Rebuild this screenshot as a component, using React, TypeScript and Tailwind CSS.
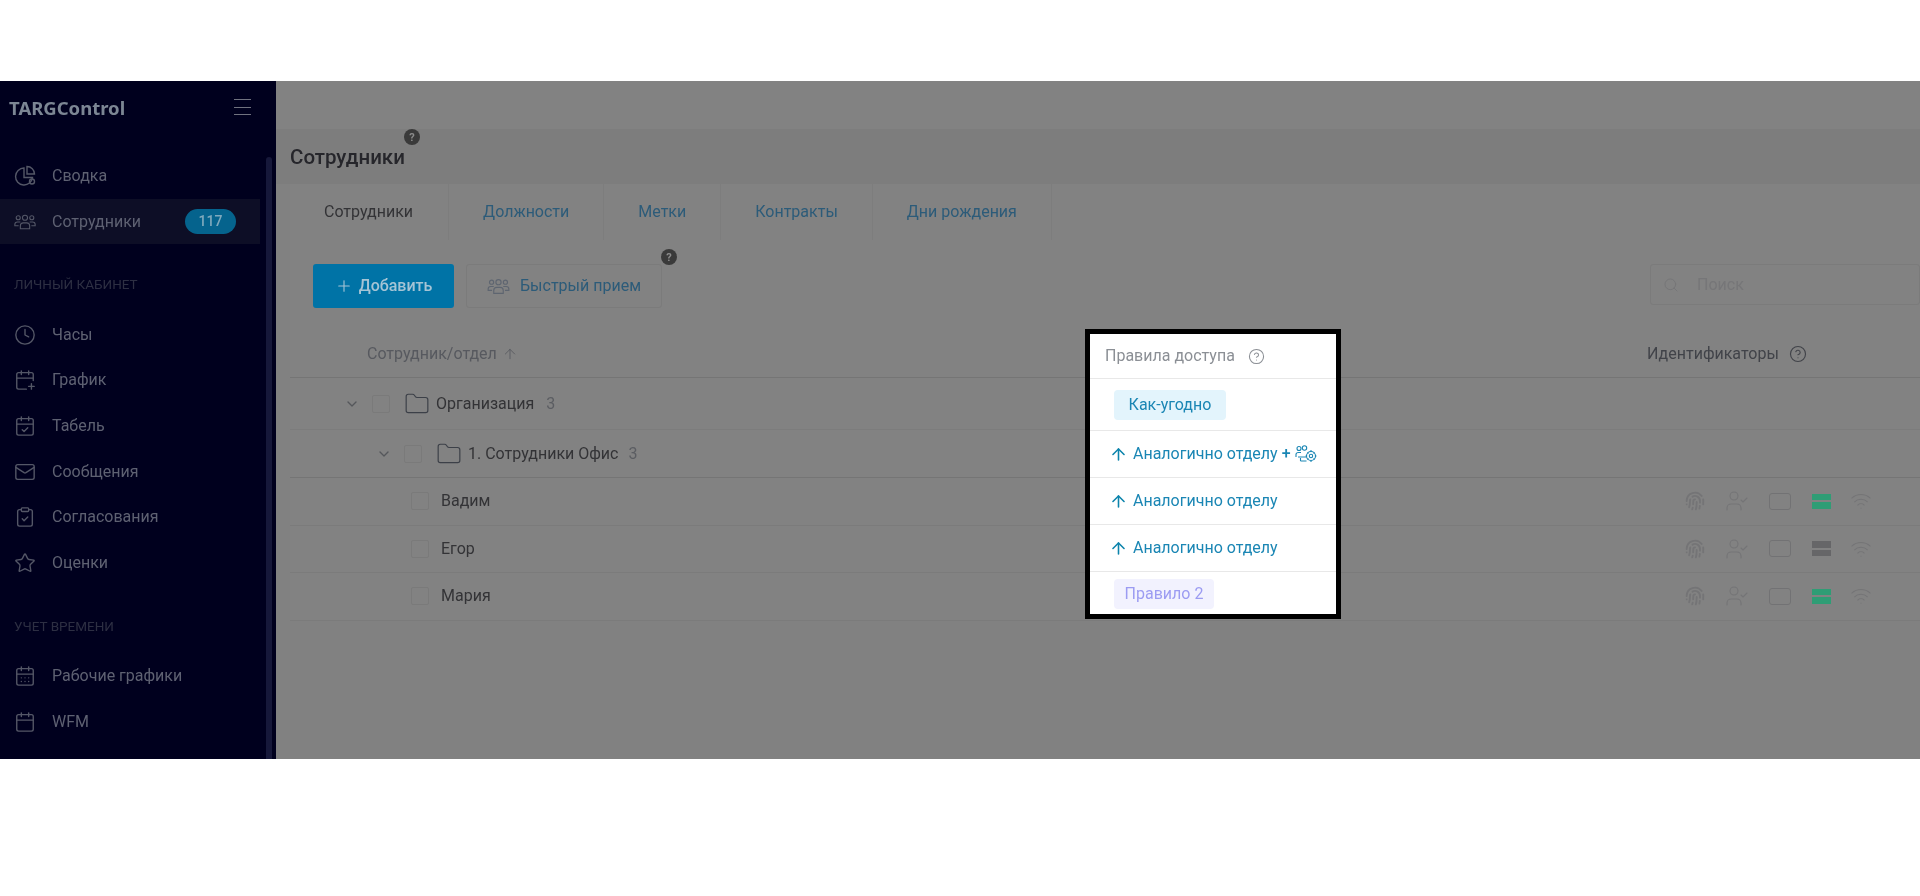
import React from "react";
import {
  ArrowUp,
  Calendar,
  CalendarCheck,
  CalendarDays,
  CalendarPlus,
  ChevronDown,
  CircleHelp,
  ClipboardCheck,
  Clock,
  Fingerprint,
  Folder,
  Mail,
  Plus,
  Search,
  Star,
  UserCheck,
  Wifi,
} from "lucide-react";

function PeopleIcon({ className }: { className?: string }) {
  return (
    <svg viewBox="0 0 26 22" fill="none" stroke="currentColor" strokeWidth="1.3" className={className}>
      <circle cx="13" cy="6" r="3" />
      <circle cx="5" cy="6" r="2.4" />
      <circle cx="21" cy="6" r="2.4" />
      <path d="M7.5 19v-3.5c0-2 1.5-3.5 3.5-3.5h4c2 0 3.5 1.5 3.5 3.5V19z" />
      <path d="M7.5 11H4c-1.7 0-3 1.3-3 3v1.500h4.500" />
      <path d="M18.500 11H22c1.700 0 3 1.300 3 3v1.500h-4.500" />
    </svg>
  );
}

function PieIcon({ className }: { className?: string }) {
  return (
    <svg viewBox="0 0 22 22" fill="none" stroke="currentColor" strokeWidth="1.4" className={className}>
      <path d="M10 3a8.500 8.500 0 1 0 8.500 9.500H10z" />
      <path d="M13 1.500a7.500 7.500 0 0 1 7.500 7.500H13z" />
      <circle cx="18" cy="16.500" r="2.500" />
    </svg>
  );
}

function UserGearIcon({ className }: { className?: string }) {
  return (
    <svg viewBox="0 0 22 18" fill="none" stroke="currentColor" strokeWidth="1.100" className={className}>
      <circle cx="4" cy="3.500" r="2" />
      <circle cx="9.500" cy="3" r="2.200" />
      <path d="M1 12V9.500C1 8 2 7.500 3.500 7.500H6M3 12h8M5.500 16h6M5.500 16v-3" />
      <circle cx="16" cy="11" r="4.500" />
      <circle cx="16" cy="11" r="1.700" />
      <path d="M16 5v1.500M16 15.500V17M10.500 11H12M20 11h1.500M12.500 7.500l1 1M18.500 13.500l1 1M19.500 7.500l-1 1M13.500 13.500l-1 1" />
    </svg>
  );
}

function HelpBadge({ className }: { className: string }) {
  return (
    <span className={`absolute flex h-4 w-4 items-center justify-center rounded-full bg-[#3a3a3a] text-[11px] font-bold leading-none text-[#8c8c8c] ${className}`}>
      ?
    </span>
  );
}

function NavItem({
  icon: Icon,
  label,
  active,
  badge,
}: {
  icon: React.ComponentType<{ className?: string; strokeWidth?: number }>;
  label: string;
  active?: boolean;
  badge?: string;
}) {
  return (
    <div className={`flex h-[45.700px] w-[260px] items-center pl-[14px] ${active ? "bg-[#0d0e26]" : ""}`}>
      <Icon className="h-[22px] w-[22px] flex-none text-[#545767]" strokeWidth={1.500} />
      <span className="ml-4 text-[16px] leading-5 text-[#5e6172]">{label}</span>
      {badge ? (
        <span className="ml-auto mr-[24px] flex h-[25px] w-[51px] items-center justify-center rounded-full bg-[#05638d] text-[14px] font-medium text-[#7fa9bd]">
          {badge}
        </span>
      ) : null}
    </div>
  );
}

function SectionTitle({ children }: { children: string }) {
  return (
    <div className="h-[67.400px] pl-[14px] pt-[32px] text-[13.500px] leading-4 text-[#2d2f43]">{children}</div>
  );
}

function Tab({ children, active, first }: { children: string; active?: boolean; first?: boolean }) {
  return (
    <div
      className={`flex h-[56px] items-center border-r border-[#7d7d7d] text-[16px] ${first ? "pl-[34px] pr-[35px]" : "px-[34px]"} ${
        active ? "text-[#333336]" : "text-[#2c5b79]"
      }`}
    >
      {children}
    </div>
  );
}

function Keypad({ on }: { on: boolean }) {
  return (
    <span className={`flex h-[15px] w-[19px] flex-col justify-between rounded-[1px] ${on ? "text-[#2f9d75]" : "text-[#666668]"}`}>
      <span className="h-[6.500px] w-full bg-current" />
      <span className="h-[6.500px] w-full bg-current" />
    </span>
  );
}

function Identifiers({ on }: { on: boolean }) {
  return (
    <div className="absolute left-[1384px] flex items-center text-[#747476]">
      <span className="flex w-[42px] justify-center">
        <Fingerprint className="h-[20px] w-[20px]" strokeWidth={2.200} />
      </span>
      <span className="flex w-[42px] justify-center">
        <UserCheck className="h-[24px] w-[24px]" strokeWidth={1.100} />
      </span>
      <span className="flex w-[44px] justify-center">
        <span className="h-[17px] w-[22px] rounded-[3px] border border-[#727274]" />
      </span>
      <span className="flex w-[38px] justify-center">
        <Keypad on={on} />
      </span>
      <span className="flex w-[42px] justify-center">
        <Wifi className="h-[22px] w-[22px]" strokeWidth={1.100} />
      </span>
    </div>
  );
}

function EmployeeRow({ name, on }: { name: string; on?: boolean }) {
  return (
    <div className="relative flex h-[47.500px] items-center border-b border-[#7b7b7b] pl-[121px] text-[16px] text-[#333336]">
      <span className="h-[18px] w-[18px] rounded-[2px] border border-[#7a7a7a]" />
      <span className="ml-[12px]">{name}</span>
      {on === undefined ? null : <Identifiers on={on} />}
    </div>
  );
}

function InheritRow({ plus }: { plus?: boolean }) {
  return (
    <div className="flex h-[47px] items-center border-b border-[#e8e8e8] pl-[19px] text-[16px] text-[#1a86b4]">
      <ArrowUp className="h-[19px] w-[19px] text-[#0d84ac]" strokeWidth={2} />
      <span className="ml-[5px]">Аналогично отделу</span>
      {plus ? (
        <>
          <span className="ml-[4px] font-medium">+</span>
          <UserGearIcon className="ml-[4px] h-[18px] w-[22px]" />
        </>
      ) : null}
    </div>
  );
}

export default function App() {
  return (
    <div className="h-[896px] overflow-hidden bg-white pt-[81px] [font-family:Roboto,sans-serif] blur-[0.4px]">
      <div className="flex h-[678px]">
        <aside className="relative w-[276px] flex-none bg-[#00001e]">
          <div className="flex h-[72px] items-start justify-between pl-[9px] pr-[25px] pt-[15px]">
            <span className="[font-family:'Noto_Sans',sans-serif] text-[18.500px] font-bold leading-6 text-[#7c8694]">TARGControl</span>
            <span className="mt-[3px] flex h-[16px] w-[17px] flex-col justify-between">
              <span className="h-px bg-[#70727f]" />
              <span className="h-px bg-[#70727f]" />
              <span className="h-px bg-[#70727f]" />
            </span>
          </div>
          <NavItem icon={PieIcon} label="Сводка" />
          <NavItem icon={PeopleIcon} label="Сотрудники" active badge="117" />
          <SectionTitle>ЛИЧНЫЙ КАБИНЕТ</SectionTitle>
          <NavItem icon={Clock} label="Часы" />
          <NavItem icon={CalendarPlus} label="График" />
          <NavItem icon={CalendarCheck} label="Табель" />
          <NavItem icon={Mail} label="Сообщения" />
          <NavItem icon={ClipboardCheck} label="Согласования" />
          <NavItem icon={Star} label="Оценки" />
          <SectionTitle>УЧЕТ ВРЕМЕНИ</SectionTitle>
          <NavItem icon={CalendarDays} label="Рабочие графики" />
          <NavItem icon={Calendar} label="WFM" />
          <div className="absolute bottom-0 left-[266px] top-[76px] w-[6px] rounded-t bg-[#16183a]" />
        </aside>

        <main className="relative min-w-0 flex-1 overflow-hidden bg-[#818181]">
          <div className="h-[48px] bg-[#828282]" />
          <div className="relative flex h-[55px] items-center bg-[#7d7d7d] pl-[14px]">
            <h1 className="text-[20.500px] font-medium leading-7 text-[#26262b]">Сотрудники</h1>
            <HelpBadge className="left-[128px] top-[0px]" />
          </div>
          <div className="ml-[14px] bg-[#828282]">
            <div className="flex h-[56px]">
              <Tab active first>Сотрудники</Tab>
              <Tab>Должности</Tab>
              <Tab>Метки</Tab>
              <Tab>Контракты</Tab>
              <Tab>Дни рождения</Tab>
            </div>
            <div className="relative flex h-[90px] items-start pl-[23px] pt-[24px]">
              <button className="flex h-[44px] w-[141px] items-center justify-center gap-[6px] rounded-[3px] bg-[#0073a6] text-[16px] font-medium text-[#a5c4d5]">
                <Plus className="h-[18px] w-[18px]" strokeWidth={1.500} />
                Добавить
              </button>
              <button className="relative ml-[12px] flex h-[44px] w-[196px] items-center justify-center gap-[10px] rounded-[3px] border border-[#7b7b7b] text-[16px] text-[#2c5b79]">
                <PeopleIcon className="h-[19px] w-[23px] text-[#5e6570]" />
                Быстрый прием
                <HelpBadge className="-right-[16px] -top-[16px]" />
              </button>
              <div className="ml-auto flex h-[41px] w-[270px] items-center gap-[18px] rounded-[3px] border border-[#7b7b7b] pl-[12px] text-[16px] text-[#767678]">
                <Search className="h-[16px] w-[16px]" strokeWidth={1.500} />
                Поиск
              </div>
            </div>
            <div className="relative flex h-[48px] items-center border-b border-[#757575] pl-[77px] text-[16px] text-[#57595f]">
              Сотрудник/отдел
              <ArrowUp className="ml-[5px] h-[16px] w-[16px]" strokeWidth={1.300} />
              <span className="absolute left-[1357px] flex items-center gap-[10px] text-[#414349]">
                Идентификаторы
                <CircleHelp className="h-[18px] w-[18px]" strokeWidth={1.500} />
              </span>
            </div>
            <div className="flex h-[52px] items-center border-b border-[#7c7c7c] pl-[54px] text-[16px] text-[#333336]">
              <ChevronDown className="h-[16px] w-[16px] text-[#55575b]" strokeWidth={2} />
              <span className="ml-[12px] h-[18px] w-[18px] rounded-[2px] border border-[#7a7a7a]" />
              <Folder className="ml-[14px] h-[26px] w-[26px] text-[#3c4048]" strokeWidth={1.100} />
              <span className="ml-[6px]">Организация</span>
              <span className="ml-[12px] text-[#5b5d62]">3</span>
            </div>
            <div className="flex h-[48px] items-center border-b border-[#757575] pl-[86px] text-[16px] text-[#333336]">
              <ChevronDown className="h-[16px] w-[16px] text-[#55575b]" strokeWidth={2} />
              <span className="ml-[12px] h-[18px] w-[18px] rounded-[2px] border border-[#7a7a7a]" />
              <Folder className="ml-[14px] h-[26px] w-[26px] text-[#3c4048]" strokeWidth={1.100} />
              <span className="ml-[6px]">1. Сотрудники Офис</span>
              <span className="ml-[10px] text-[#5b5d62]">3</span>
            </div>
            <EmployeeRow name="Вадим" on />
            <EmployeeRow name="Егор" on={false} />
            <EmployeeRow name="Мария" on />
          </div>

          <section className="absolute left-[809px] top-[248px] h-[290px] w-[256px] border-[5px] border-black bg-white text-[16px]">
            <div className="flex h-[45px] items-center gap-[13px] border-b border-[#e8e8e8] pl-[15px] text-[#8b8f95]">
              Правила доступа
              <CircleHelp className="h-[17px] w-[17px]" strokeWidth={1.500} />
            </div>
            <div className="flex h-[52px] items-center border-b border-[#e8e8e8] pl-[24px]">
              <span className="flex h-[30px] w-[112px] items-center justify-center rounded-[4px] bg-[#e3f4fc] text-[#1a86b4]">Как-угодно</span>
            </div>
            <InheritRow plus />
            <InheritRow />
            <InheritRow />
            <div className="flex h-[38px] items-start pl-[24px] pt-[7px]">
              <span className="flex h-[30px] w-[100px] items-center justify-center rounded-[4px] bg-[#f2f2fe] text-[#9c9cf2]">Правило 2</span>
            </div>
          </section>
        </main>
      </div>
    </div>
  );
}
